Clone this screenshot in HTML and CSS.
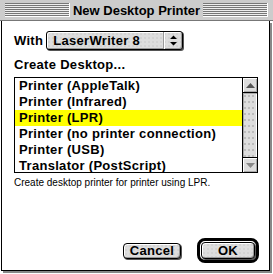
FILE: index.html
```html
<!DOCTYPE html>
<html>
<head>
<title>New Desktop Printer</title>
<meta charset="UTF-8">
<link rel="stylesheet" href="styles.css">
</head>
<body>
<div class="titlebar">
	<div class="stripes"></div>
	<div class="title">New Desktop Printer</div>
	<div class="stripes"></div>
</div>
<div class="frame">
	<div class="with">
		<span class="label">With</span>
		<div class="popup">
			<span class="popup-text">LaserWriter 8</span>
			<span class="popup-arrows">
				<svg width="9" height="11" viewBox="0 0 9 11"><path d="M4.5 0.5 L8 4 L1 4 Z M1 7 L8 7 L4.5 10.5 Z" fill="#000"/></svg>
			</span>
		</div>
	</div>
	<div class="caption">Create Desktop...</div>
	<div class="list">
		<div class="rows">
			<div class="row">Printer (AppleTalk)</div>
			<div class="row">Printer (Infrared)</div>
			<div class="row selected">Printer (LPR)</div>
			<div class="row">Printer (no printer connection)</div>
			<div class="row">Printer (USB)</div>
			<div class="row">Translator (PostScript)</div>
		</div>
		<div class="scrollbar">
			<div class="arrow up"><svg width="9" height="5" viewBox="0 0 9 5"><path d="M4.5 0 L9 5 L0 5 Z" fill="#555"/></svg></div>
			<div class="track"></div>
			<div class="arrow down"><svg width="9" height="5" viewBox="0 0 9 5"><path d="M0 0 L9 0 L4.5 5 Z" fill="#888"/></svg></div>
		</div>
	</div>
	<div class="desc">Create desktop printer for printer using LPR.</div>
	<div class="buttons">
		<div class="button cancel">Cancel</div>
		<div class="ring"><div class="button ok">OK</div></div>
	</div>
</div>
</body>
</html>
```

FILE: styles.css
```css
body{margin:0;background:#fff;font-family:"Liberation Sans",Arial,sans-serif;width:273px;height:274px;overflow:hidden;}
.titlebar{height:21px;border-bottom:1px solid #777;background:#ccc;display:flex;align-items:center;padding:0 5px;box-sizing:border-box;}
.stripes{flex:1;height:13px;background:repeating-linear-gradient(to bottom,#777 0,#777 1px,#eee 1px,#eee 2px);border-right:1px solid #fff;border-bottom:1px solid #fff;}
.title{font-weight:bold;font-size:13px;padding:0 3px;color:#000;}
.frame{margin-left:1px;width:255px;height:249px;border:1px solid #000;border-top:none;box-shadow:2px 2px 0 #888;display:flex;flex-direction:column;padding:0 0 0 12px;}
.with{display:flex;align-items:center;margin-top:10px;height:19px;}
.label{font-weight:bold;font-size:13px;letter-spacing:0.3px;margin-right:3px;}
.popup{width:135px;height:17px;border:1px solid #000;border-radius:3px;background:#ddd radial-gradient(#bbb 0.5px,transparent 0.8px) 0 0/4px 4px;box-shadow:1px 1px 0 #555,inset 1px 1px 0 #fff,inset -1px -1px 0 #999;display:flex;align-items:center;}
.popup-text{flex:1;font-weight:bold;font-size:13px;letter-spacing:0.3px;padding-left:6px;}
.popup-arrows{width:18px;height:17px;border-left:1px solid #999;box-shadow:inset 1px 0 0 #fff;display:flex;align-items:center;justify-content:center;}
.caption{font-weight:bold;font-size:13px;letter-spacing:0.3px;margin-top:7px;height:16px;line-height:16px;}
.list{margin-top:4px;width:242px;height:94px;border:1px solid #000;display:flex;overflow:hidden;}
.rows{flex:1;}
.row{height:16px;line-height:16px;font-weight:bold;font-size:13px;letter-spacing:0.3px;padding-left:4px;white-space:nowrap;}
.selected{background:#ffff00;}
.scrollbar{width:14px;border-left:1px solid #000;display:flex;flex-direction:column;background:#ddd;}
.arrow{height:14px;background:#ddd;display:flex;align-items:center;justify-content:center;box-shadow:inset 1px 1px 0 #fff,inset -1px -1px 0 #aaa;}
.up{border-bottom:1px solid #000;}
.down{border-top:1px solid #000;}
.track{flex:1;background:#ddd radial-gradient(#aaa 0.5px,transparent 0.8px) 0 0/4px 6px;box-shadow:inset 1px 1px 0 #aaa,inset -1px 0 0 #fff;}
.desc{font-size:10px;margin-top:4px;}
.buttons{margin-top:auto;display:flex;justify-content:flex-end;align-items:center;gap:16px;padding:0 10px 7px 0;}
.button{border:1px solid #000;border-radius:4px;background:#ddd radial-gradient(#bbb 0.5px,transparent 0.8px) 0 0/4px 4px;box-shadow:1px 1px 0 #555,inset 1px 1px 0 #fff,inset -1px -1px 0 #999;text-align:center;font-weight:bold;font-size:13px;letter-spacing:0.3px;}
.cancel{width:56px;height:14px;line-height:14px;}
.ok{width:52px;height:15px;line-height:15px;}
.ring{border:3px solid #000;border-radius:8px;padding:1px;}
```
